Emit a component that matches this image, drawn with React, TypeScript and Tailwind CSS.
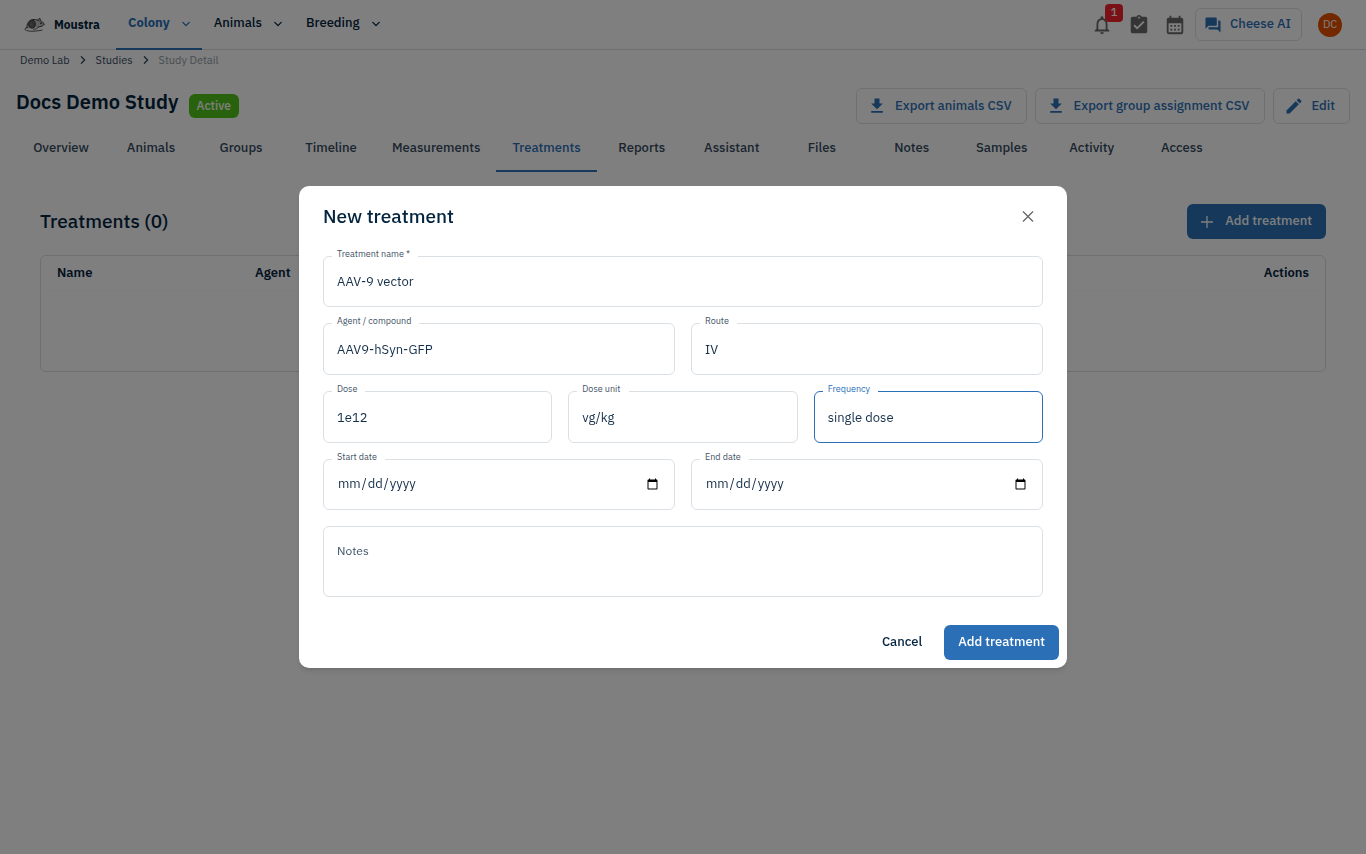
import type { ReactNode } from "react";
import { MdAssignmentTurnedIn, MdCalendarMonth, MdEdit, MdForum, MdGetApp, MdNotificationsNone } from "react-icons/md";

const navItems = [
  { label: "Colony", active: true },
  { label: "Animals", active: false },
  { label: "Breeding", active: false },
];

const tabs = [
  "Overview",
  "Animals",
  "Groups",
  "Timeline",
  "Measurements",
  "Treatments",
  "Reports",
  "Assistant",
  "Files",
  "Notes",
  "Samples",
  "Activity",
  "Access",
];

function Chevron({ className }: { className: string }) {
  return (
    <svg viewBox="0 0 8 8" className={className} fill="none" stroke="currentColor" strokeWidth="1.3" strokeLinecap="round" strokeLinejoin="round" aria-hidden="true">
      <path d="M.8 2.400 4 5.600l3.200-3.200" />
    </svg>
  );
}

function MouseLogo() {
  return (
    <svg viewBox="0 0 22 18" className="h-[18px] w-[22px]" fill="none" stroke="#444" aria-hidden="true">
      <path d="M3 12.500C2.300 8 5 4 9 3.500c1.500-.2 3 .2 4.500.6l2.300-1.900.8 2.400 3.900 3.400c-.8 1.800-3.500 2.800-7 3.200" fill="#c4c4c4" strokeWidth="1" />
      <ellipse cx="8" cy="8.200" rx="3.200" ry="3.800" fill="#777" strokeWidth="1.400" />
      <path d="M6.500 7.500c1-1.500 3-1 3 .8s-1.800 2.200-2.600 1" strokeWidth=".9" />
      <path d="M3.500 11.500c-3 .3-3.500 2.200-1 3 4.500 1.500 10 .6 16-.5M9 13.300c3-.2 4.500-.8 5.500-1.800" strokeWidth=".9" />
      <path d="M13 4.500c1.200-.6 2.600 0 3 1.200" strokeWidth=".8" />
      <circle cx="17" cy="7.300" r=".6" fill="#333" />
    </svg>
  );
}

function Header() {
  return (
    <header className="flex h-[50px] items-center border-b border-[#dbe0e5] pl-6 pr-6">
      <a href="#" className="flex w-20 items-center gap-2 text-[12px] font-bold">
        <MouseLogo />
        Moustra
      </a>
      <nav className="-mb-px ml-3 flex self-stretch">
        {navItems.map((item) => (
          <button
            key={item.label}
            type="button"
            className={
              item.active
                ? "flex items-center gap-3 border-b-2 border-[#2b70b7] px-3 pb-0.5 text-[13px] font-bold text-[#2b70b7]"
                : "flex items-center gap-3 border-b-2 border-transparent px-3 pb-0.5 text-[13px] font-medium"
            }
          >
            {item.label}
            <Chevron className="mt-0.5 size-2" />
          </button>
        ))}
      </nav>
      <div className="ml-auto flex items-center">
        <button type="button" aria-label="Notifications" className="relative mr-[15px] text-[#6b6b6b]">
          <MdNotificationsNone className="size-[22px]" />
          <span className="absolute -top-[10px] left-[14px] flex size-[18px] items-center justify-center rounded bg-[#f5222d] text-[11px] font-medium text-white">1</span>
        </button>
        <button type="button" aria-label="Tasks" className="mr-[14px] text-[#6b6b6b]">
          <MdAssignmentTurnedIn className="size-[22px]" />
        </button>
        <button type="button" aria-label="Calendar" className="mr-[9px] text-[#6b6b6b]">
          <MdCalendarMonth className="size-[22px]" />
        </button>
        <button type="button" className="mr-4 flex h-[33px] items-center gap-2 rounded-md border border-[#dbe0e5] pl-2 pr-[10px] pb-0.5 text-[13px] font-medium text-[#2b70b7]">
          <MdForum className="mt-0.5 size-[18px]" />
          Cheese AI
        </button>
        <button type="button" aria-label="Account" className="flex size-6 items-center justify-center rounded-full bg-[#e65100] text-[11px] text-white">
          DC
        </button>
      </div>
    </header>
  );
}

function OutlineButton({ icon, children }: { icon: ReactNode; children: ReactNode }) {
  return (
    <button type="button" className="flex h-9 items-center gap-2 rounded-md border border-[#dbe0e5] pl-[10px] pr-[14px] text-[13px] font-medium text-[#2b70b7]">
      {icon}
      {children}
    </button>
  );
}

function StudyPage() {
  return (
    <>
      <nav aria-label="Breadcrumb" className="flex h-5 items-center gap-[9px] px-5 text-[11px] text-[#344a5f]">
        <a href="#">Demo Lab</a>
        <Chevron className="size-2 -rotate-90" />
        <a href="#">Studies</a>
        <Chevron className="size-2 -rotate-90" />
        <span className="text-[#8f9aa5]">Study Detail</span>
      </nav>

      <div className="mt-[18px] flex items-start justify-between px-4">
        <div className="flex items-start gap-[10px]">
          <h1 className="text-[20px] font-semibold leading-7">Docs Demo Study</h1>
          <span className="mt-[6px] flex h-6 items-center rounded-md bg-[#52c41a] px-2 text-[12px] font-medium text-white">Active</span>
        </div>
        <div className="flex gap-2">
          <OutlineButton icon={<MdGetApp className="size-5" />}>Export animals CSV</OutlineButton>
          <OutlineButton icon={<MdGetApp className="size-5" />}>Export group assignment CSV</OutlineButton>
          <OutlineButton icon={<MdEdit className="size-5" />}>Edit</OutlineButton>
        </div>
      </div>

      <div role="tablist" className="flex h-12 px-4">
        {tabs.map((tab) => (
          <button
            key={tab}
            type="button"
            role="tab"
            aria-selected={tab === "Treatments"}
            className={
              tab === "Treatments"
                ? "min-w-[90px] border-b-2 border-[#2b70b7] px-4 pt-0.5 text-[13px] font-medium text-[#2b70b7]"
                : "min-w-[90px] border-b-2 border-transparent px-4 pt-0.5 text-[13px] font-medium text-[#344a5f]"
            }
          >
            {tab}
          </button>
        ))}
      </div>

      <section className="px-10 pt-8">
        <div className="flex items-center justify-between">
          <h2 className="text-[19px] font-medium">Treatments (0)</h2>
          <button type="button" className="flex h-[35px] items-center gap-3 rounded-md bg-[#2b70b7] px-[14px] pb-0.5 text-[13px] font-medium text-white">
            <svg viewBox="0 0 12 12" className="mt-0.5 size-3" fill="none" stroke="currentColor" strokeWidth="1.300" aria-hidden="true">
              <path d="M6 0v12M0 6h12" />
            </svg>
            Add treatment
          </button>
        </div>
        <div className="mt-4 h-[117px] rounded-md border border-[#dbe0e5]">
          <table className="w-full text-left text-[13px]">
            <thead className="border-b border-[#f9fafb]">
              <tr className="h-[34px]">
                <th className="w-[198px] pl-4 font-semibold">Name</th>
                <th className="pl-4 font-semibold">Agent</th>
                <th className="pr-4 text-right font-semibold">Actions</th>
              </tr>
            </thead>
          </table>
        </div>
      </section>
    </>
  );
}

type FieldProps = {
  id: string;
  label: string;
  value?: string;
  type?: "text" | "date";
  focused?: boolean;
  required?: boolean;
};

function inputClass({ type, focused, required }: Pick<FieldProps, "type" | "focused" | "required">) {
  if (focused) {
    return "block h-[52px] w-full rounded-md border border-[#2b70b7] px-[13px] text-[13px] text-[#15304a] outline-none";
  }
  if (type === "date") {
    return "block h-[51px] w-full rounded-md border border-[#dbe0e5] px-[13px] pb-px text-[13px] text-[#15304a] outline-none";
  }
  if (required) {
    return "block h-[51px] w-full rounded-md border border-[#dbe0e5] px-[13px] text-[13px] text-[#15304a] outline-none";
  }
  return "block h-[52px] w-full rounded-md border border-[#dbe0e5] px-[13px] text-[13px] text-[#15304a] outline-none";
}

function Field({ id, label, value, type = "text", focused = false, required = false }: FieldProps) {
  return (
    <div className="relative min-w-0 flex-1">
      <label
        htmlFor={id}
        className={
          focused
            ? "absolute -top-2 left-[9px] bg-white pl-[5px] pr-2 text-[9px] leading-3 text-[#2b70b7]"
            : "absolute -top-2 left-[9px] bg-white pl-[5px] pr-2 text-[9px] leading-3 text-[#3f5366]"
        }
      >
        {label}
        {required && " *"}
      </label>
      <input id={id} type={type} defaultValue={value} required={required} className={inputClass({ type, focused, required })} />
    </div>
  );
}

function NewTreatmentDialog() {
  return (
    <div className="fixed inset-0 flex items-center justify-center bg-black/50">
      <div role="dialog" aria-modal="true" aria-labelledby="dialog-title" className="w-full max-w-3xl rounded-[10px] bg-white shadow-md">
        <div className="flex h-[61px] items-center justify-between px-6">
          <h2 id="dialog-title" className="text-[19px] font-medium">New treatment</h2>
          <button type="button" aria-label="Close" className="flex size-[30px] items-center justify-center text-[#666]">
            <svg viewBox="0 0 12 12" className="size-3" fill="none" stroke="currentColor" strokeWidth="1.300" aria-hidden="true">
              <path d="m1 .5 10 10M11 .5l-10 10" />
            </svg>
          </button>
        </div>
        <form className="flex flex-col gap-4 px-6 pt-[9px]">
          <div className="flex">
            <Field id="name" label="Treatment name" value="AAV-9 vector" required />
          </div>
          <div className="flex gap-4">
            <Field id="agent" label="Agent / compound" value="AAV9-hSyn-GFP" />
            <Field id="route" label="Route" value="IV" />
          </div>
          <div className="flex gap-4">
            <Field id="dose" label="Dose" value="1e12" />
            <Field id="dose-unit" label="Dose unit" value="vg/kg" />
            <Field id="frequency" label="Frequency" value="single dose" focused />
          </div>
          <div className="flex gap-4">
            <Field id="start-date" label="Start date" type="date" />
            <Field id="end-date" label="End date" type="date" />
          </div>
          <textarea
            aria-label="Notes"
            placeholder="Notes"
            className="block h-[71px] w-full resize-none rounded-md border border-[#dbe0e5] px-[13px] py-[14px] text-[12px] leading-5 outline-none placeholder:text-[#3f5366]"
          />
        </form>
        <div className="flex justify-end gap-2 px-2 pb-2 pt-7">
          <button type="button" className="h-[35px] px-[14px] pb-0.5 text-[13px] font-medium">Cancel</button>
          <button type="button" className="h-[35px] rounded-md bg-[#2b70b7] px-[14px] pb-0.5 text-[13px] font-medium text-white">Add treatment</button>
        </div>
      </div>
    </div>
  );
}

export default function App() {
  return (
    <div className="min-h-screen bg-white font-['IBM_Plex_Sans','Inter',sans-serif] text-[#04243f]">
      <Header />
      <StudyPage />
      <NewTreatmentDialog />
    </div>
  );
}
